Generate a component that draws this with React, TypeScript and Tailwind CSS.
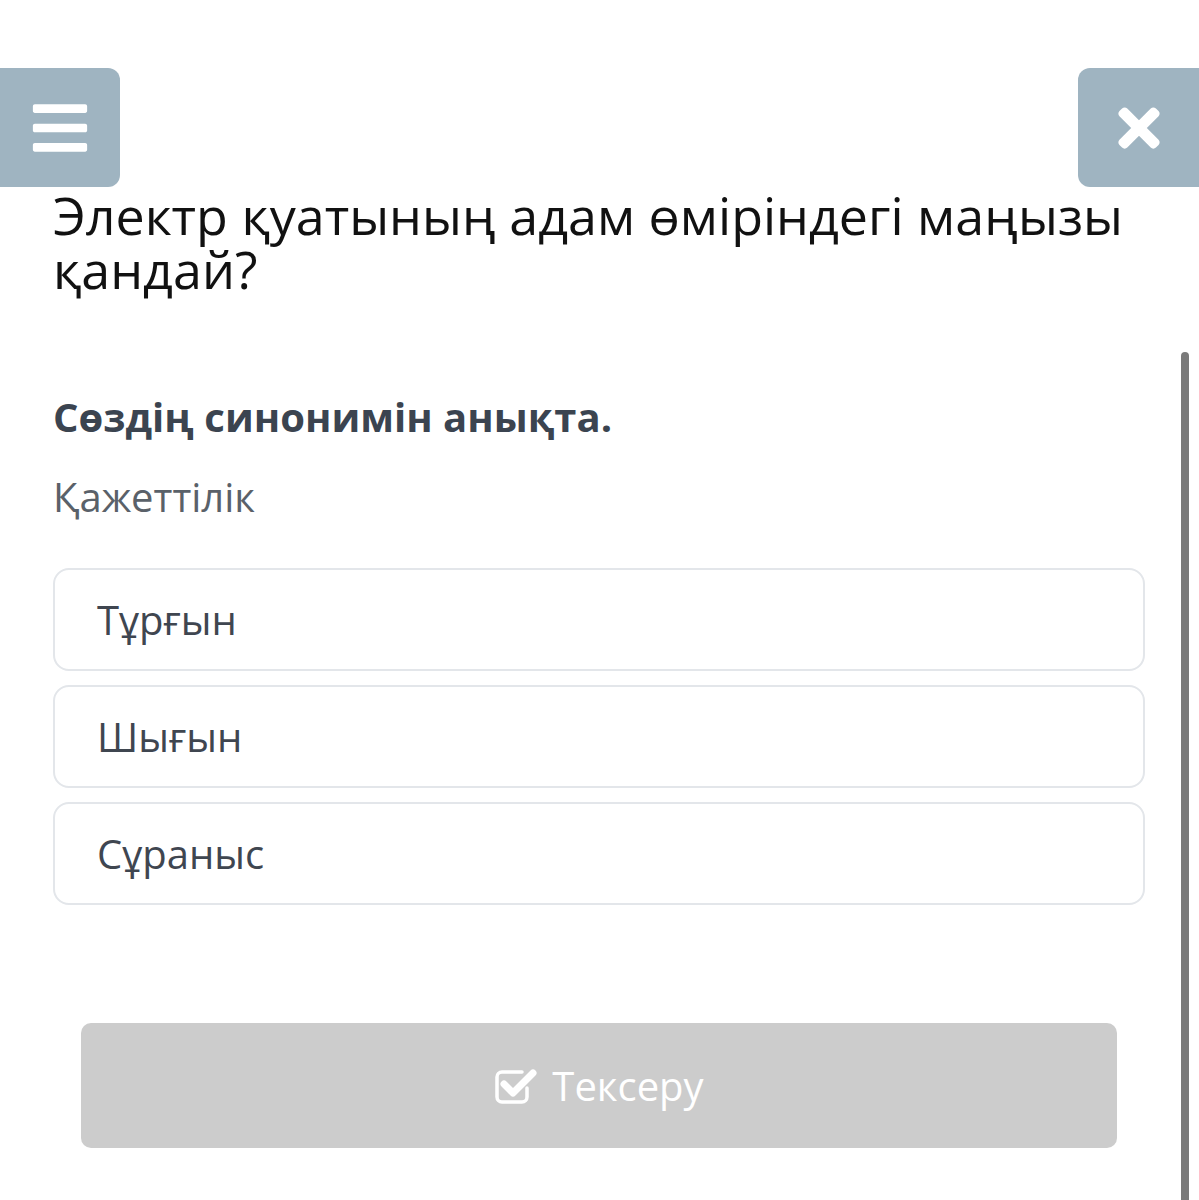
import { FaBars, FaTimes } from 'react-icons/fa';

const options = ['Тұрғын', 'Шығын', 'Сұраныс'];

function CheckSquare() {
  return (
    <svg viewBox="0 0 44 40" className="h-[40px] w-[44px]" fill="none" stroke="currentColor">
      <path d="M33 22v9a5 5 0 0 1-5 5H8a5 5 0 0 1-5-5V11a5 5 0 0 1 5-5h20" strokeWidth="3.5" strokeLinecap="round" />
      <path d="M10 18l9 9 20-20" strokeWidth="7" strokeLinecap="round" strokeLinejoin="round" />
    </svg>
  );
}

export default function App() {
  return (
    <div className="relative min-h-[1200px] bg-white font-['Open_Sans',sans-serif] overflow-hidden">
      <div className="flex justify-between pt-[68px]">
        <button className="flex h-[119px] w-[120px] items-center justify-center rounded-r-[12px] bg-[#9fb4c1] text-white">
          <FaBars className="h-[62px] w-[62px]" />
        </button>
        <button className="flex h-[119px] w-[121px] items-center justify-center rounded-l-[12px] bg-[#9fb4c1] text-white">
          <FaTimes className="h-[60px] w-[60px]" />
        </button>
      </div>

      <div className="px-[53px] pr-[54px]">
        <h1 className="mt-[1px] text-[52px] leading-[54px] text-[#111]">
          Электр қуатының адам өміріндегі маңызы қандай?
        </h1>

        <p className="mt-[96px] text-[40px] font-bold leading-[50px] text-[#3b4450]">Сөздің синонимін анықта.</p>
        <p className="mt-[30px] text-[40px] leading-[50px] text-[#5a6169]">Қажеттілік</p>

        <div className="mt-[46px] flex flex-col gap-[14px]">
          {options.map((o) => (
            <div
              key={o}
              className="flex h-[103px] items-center rounded-[16px] border-2 border-[#e3e6ea] px-[42px] text-[40px] text-[#3f4650]"
            >
              {o}
            </div>
          ))}
        </div>

        <div className="mt-[118px] px-[28px]">
          <button className="flex h-[125px] w-full items-center justify-center gap-[14px] rounded-[10px] bg-[#cccccc] text-[40px] text-white">
            <CheckSquare />
            <span>Тексеру</span>
          </button>
        </div>
      </div>

      <div className="absolute left-[1181px] top-[352px] h-[860px] w-[8px] rounded-full bg-[#7a7a7a]" />
    </div>
  );
}
